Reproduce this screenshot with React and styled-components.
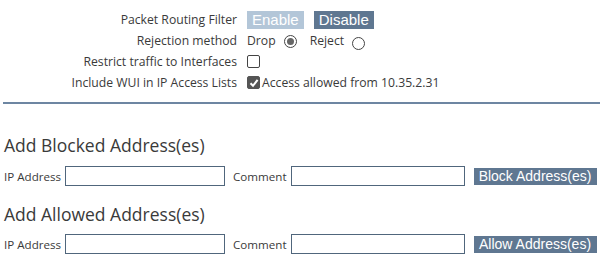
import React, { useState } from "react";
import styled, { createGlobalStyle } from "styled-components";

const GlobalStyle = createGlobalStyle`
  body {
    margin: 0;
    background: #ffffff;
    font-family: "Open Sans", "Noto Sans", sans-serif;
    color: #3a3a3a;
  }
`;

const Page = styled.div`
  padding: 0 2px 0 4px;
`;

const SettingsGrid = styled.div`
  display: grid;
  grid-template-columns: 233px 1fr;
  column-gap: 10px;
  padding-top: 9px;
  font-size: 12.2px;
`;

const Label = styled.div`
  text-align: right;
  height: 21px;
  line-height: 21px;
  white-space: nowrap;
`;

const Value = styled.div`
  display: flex;
  align-items: center;
  height: 21px;
  white-space: nowrap;
`;

const ToggleButton = styled.button`
  font-family: "Liberation Sans", Arial, sans-serif;
  font-size: 15px;
  color: #fff;
  border: none;
  padding: 0 5px;
  height: 18px;
  line-height: 18px;
  margin-right: 10px;
  white-space: nowrap;
  background: ${(p) => (p.$active ? "#5f7791" : "#b3c6d8")};
  cursor: pointer;
`;

const RadioLabel = styled.label`
  display: flex;
  align-items: center;
  gap: 8px;
  margin-right: 13px;
`;

const Radio = styled.span`
  width: 13px;
  height: 13px;
  box-sizing: border-box;
  border-radius: 50%;
  border: 1px solid #444;
  display: inline-flex;
  align-items: center;
  justify-content: center;
  margin-top: ${(p) => (p.$checked ? 2 : 5)}px;
  &::after {
    content: "";
    width: 7px;
    height: 7px;
    border-radius: 50%;
    background: #666;
    display: ${(p) => (p.$checked ? "block" : "none")};
  }
`;

const Check = styled.span`
  width: 13px;
  height: 13px;
  box-sizing: border-box;
  border-radius: 2px;
  border: 1px solid ${(p) => (p.$checked ? "#555" : "#444")};
  background: ${(p) => (p.$checked ? "#555" : "#fff")};
  display: inline-flex;
  align-items: center;
  justify-content: center;
  margin-right: 2px;
`;

const Divider = styled.hr`
  border: none;
  border-top: 2px solid #6d86a2;
  margin: 9px 0 0 -1px;
`;

const Heading = styled.h2`
  font-size: 17.5px;
  font-weight: 400;
  margin: ${(p) => p.$top}px 0 0 0;
  line-height: 22px;
  color: #3a3a3a;
`;

const FormRow = styled.form`
  display: flex;
  align-items: center;
  margin-top: ${(p) => p.$top}px;
  font-size: 11.6px;
`;

const FieldLabel = styled.span`
  margin-right: 4px;
  white-space: nowrap;
`;

const Input = styled.input`
  width: ${(p) => p.$w}px;
  height: 20px;
  box-sizing: border-box;
  border: 1px solid #50667c;
  margin: 0 ${(p) => p.$mr}px 0 0;
  padding: 0 3px;
`;

const ActionButton = styled.button`
  font-family: "Liberation Sans", Arial, sans-serif;
  font-size: 14px;
  color: #fff;
  background: #5f7791;
  border: none;
  height: 17px;
  line-height: 17px;
  padding: 0;
  width: 123px;
  white-space: nowrap;
  text-align: center;
`;

const CheckIcon = () => (
  <svg width="10" height="10" viewBox="0 0 10 10">
    <path d="M1.5 5.2 L4 7.8 L8.6 1.8" fill="none" stroke="#fff" strokeWidth="2" />
  </svg>
);

export default function App() {
  const [method, setMethod] = useState("drop");
  const [filterOn, setFilterOn] = useState(false);

  return (
    <Page>
      <GlobalStyle />
      <SettingsGrid>
        <Label>Packet Routing Filter</Label>
        <Value>
          <ToggleButton $active={filterOn} onClick={() => setFilterOn(true)}>
            Enable
          </ToggleButton>
          <ToggleButton $active={!filterOn} onClick={() => setFilterOn(false)}>
            Disable
          </ToggleButton>
        </Value>

        <Label>Rejection method</Label>
        <Value>
          <RadioLabel onClick={() => setMethod("drop")}>
            Drop <Radio $checked={method === "drop"} />
          </RadioLabel>
          <RadioLabel onClick={() => setMethod("reject")}>
            Reject <Radio $checked={method === "reject"} />
          </RadioLabel>
        </Value>

        <Label>Restrict traffic to Interfaces</Label>
        <Value>
          <Check />
        </Value>

        <Label>Include WUI in IP Access Lists</Label>
        <Value>
          <Check $checked>
            <CheckIcon />
          </Check>
          Access allowed from 10.35.2.31
        </Value>
      </SettingsGrid>

      <Divider />

      <Heading $top={30}>Add Blocked Address(es)</Heading>
      <FormRow $top={10} onSubmit={(e) => e.preventDefault()}>
        <FieldLabel>IP Address</FieldLabel>
        <Input $w={160} $mr={8} />
        <FieldLabel>Comment</FieldLabel>
        <Input $w={174} $mr={9} />
        <ActionButton type="submit">Block Address(es)</ActionButton>
      </FormRow>

      <Heading $top={17}>Add Allowed Address(es)</Heading>
      <FormRow $top={9} onSubmit={(e) => e.preventDefault()}>
        <FieldLabel>IP Address</FieldLabel>
        <Input $w={160} $mr={8} />
        <FieldLabel>Comment</FieldLabel>
        <Input $w={174} $mr={9} />
        <ActionButton type="submit">Allow Address(es)</ActionButton>
      </FormRow>
    </Page>
  );
}
